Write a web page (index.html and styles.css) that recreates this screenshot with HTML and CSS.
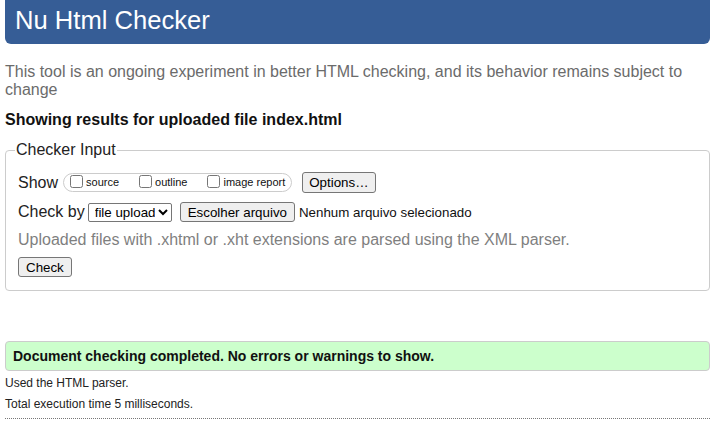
FILE: index.html
```html
<!DOCTYPE html>
<html lang="en">
<head>
<meta charset="utf-8">
<title>Nu Html Checker</title>
<link rel="stylesheet" href="styles.css">
</head>
<body>
<header class="masthead">
  <h1 class="title">Nu Html Checker</h1>
</header>
<p class="intro">This tool is an ongoing experiment in better HTML checking, and its behavior remains subject to change</p>
<p class="results-title">Showing results for uploaded file index.html</p>
<form class="checker-form">
  <fieldset class="checker">
    <legend class="checker-legend">Checker Input</legend>
    <div class="row row-show">
      <span class="row-label">Show</span>
      <span class="extras">
        <label class="extra"><input type="checkbox" class="cb">source</label>
        <label class="extra"><input type="checkbox" class="cb">outline</label>
        <label class="extra"><input type="checkbox" class="cb">image report</label>
      </span>
      <button type="button" class="btn btn-options">Options…</button>
    </div>
    <div class="row row-by">
      <span class="row-label">Check by</span>
      <select class="select"><option>file upload</option></select>
      <button type="button" class="btn btn-file">Escolher arquivo</button>
      <span class="file-status">Nenhum arquivo selecionado</span>
    </div>
    <p class="note">Uploaded files with .xhtml or .xht extensions are parsed using the XML parser.</p>
    <div class="row row-submit">
      <button type="button" class="btn btn-check">Check</button>
    </div>
  </fieldset>
</form>
<p class="success">Document checking completed. No errors or warnings to show.</p>
<p class="meta meta-first">Used the HTML parser.</p>
<p class="meta">Total execution time 5 milliseconds.</p>
<hr class="rule">
</body>
</html>
```

FILE: styles.css
```css
html, body {
  background: #ffffff;
}
body {
  margin: 0;
  padding: 0 8px 0 5px;
  font-family: "Liberation Sans", Arial, sans-serif;
  font-size: 16px;
  color: #000;
}
.masthead {
  background: #365d96;
  border-radius: 0 0 6px 6px;
  height: 44px;
  box-sizing: border-box;
  padding: 0 0 4px 10px;
}
.title {
  margin: 0;
  font-size: 25.6px;
  font-weight: normal;
  line-height: 40px;
  color: #ffffff;
}
.intro {
  margin: 19px 0 0;
  line-height: 18px;
  color: #6b6b6b;
}
.results-title {
  margin: 12px 0 0;
  line-height: 18px;
  font-weight: bold;
  color: #111;
}
.checker-form {
  margin: 12px 0 0;
}
.checker {
  margin: 0;
  padding: 0 12px 13px;
  border: 1px solid #cccccc;
  border-radius: 4px;
  min-width: 0;
}
.checker-legend {
  padding: 0 1px;
  margin-left: -3px;
  line-height: 18px;
  color: #222;
}
.row {
  display: flex;
  align-items: center;
}
.row-label {
  line-height: 18px;
  color: #222;
}
.row-show {
  margin-top: 13px;
  height: 21px;
}
.extras {
  display: flex;
  align-items: center;
  gap: 16px;
  height: 19px;
  box-sizing: border-box;
  margin-left: 5px;
  padding: 0 6px 0 2px;
  border: 1px solid #cccccc;
  border-radius: 10px;
}
.extra {
  display: flex;
  align-items: center;
  font-size: 11px;
  line-height: 13px;
  color: #111;
}
.extra .cb {
  width: 13px;
  height: 13px;
  margin: -2px 3px 0 4px;
}
.btn {
  font-family: "Liberation Sans", Arial, sans-serif;
  font-size: 13.333px;
  line-height: 15px;
  color: #000;
  background: #efefef;
  border: 1px solid #767676;
  border-radius: 3px;
  padding: 2px 7px;
}
.btn-options {
  margin-left: 10px;
  height: 21px;
  padding: 2px 6px;
}
.row-by {
  margin-top: 9px;
  height: 20px;
}
.select {
  font-family: "Liberation Sans", Arial, sans-serif;
  font-size: 13.333px;
  height: 19px;
  width: 84px;
  margin-left: 3px;
  border: 1px solid #767676;
  border-radius: 2px;
  background: #fff;
  padding: 0 0 0 2px;
}
.btn-file {
  margin-left: 8px;
  height: 20px;
  padding: 1px 7px;
}
.file-status {
  margin-left: 4px;
  font-size: 13.333px;
  color: #111;
}
.note {
  margin: 9px 0 0;
  line-height: 18px;
  color: #7f7f7f;
}
.row-submit {
  margin-top: 8px;
}
.btn-check {
  height: 20px;
  padding: 1px 7px;
}
.success {
  margin: 50px 0 0;
  padding: 6px 7px;
  background: #ccffcc;
  border: 1px solid #cccccc;
  border-radius: 4px;
  font-size: 14px;
  line-height: 16px;
  font-weight: bold;
  color: #111;
}
.meta {
  margin: 7px 0 0;
  font-size: 12px;
  line-height: 14px;
  color: #222;
}
.meta-first {
  margin-top: 5px;
}
.rule {
  margin: 7px 0 0;
  border: 0;
  border-top: 1px dotted #777;
  height: 0;
}
```
